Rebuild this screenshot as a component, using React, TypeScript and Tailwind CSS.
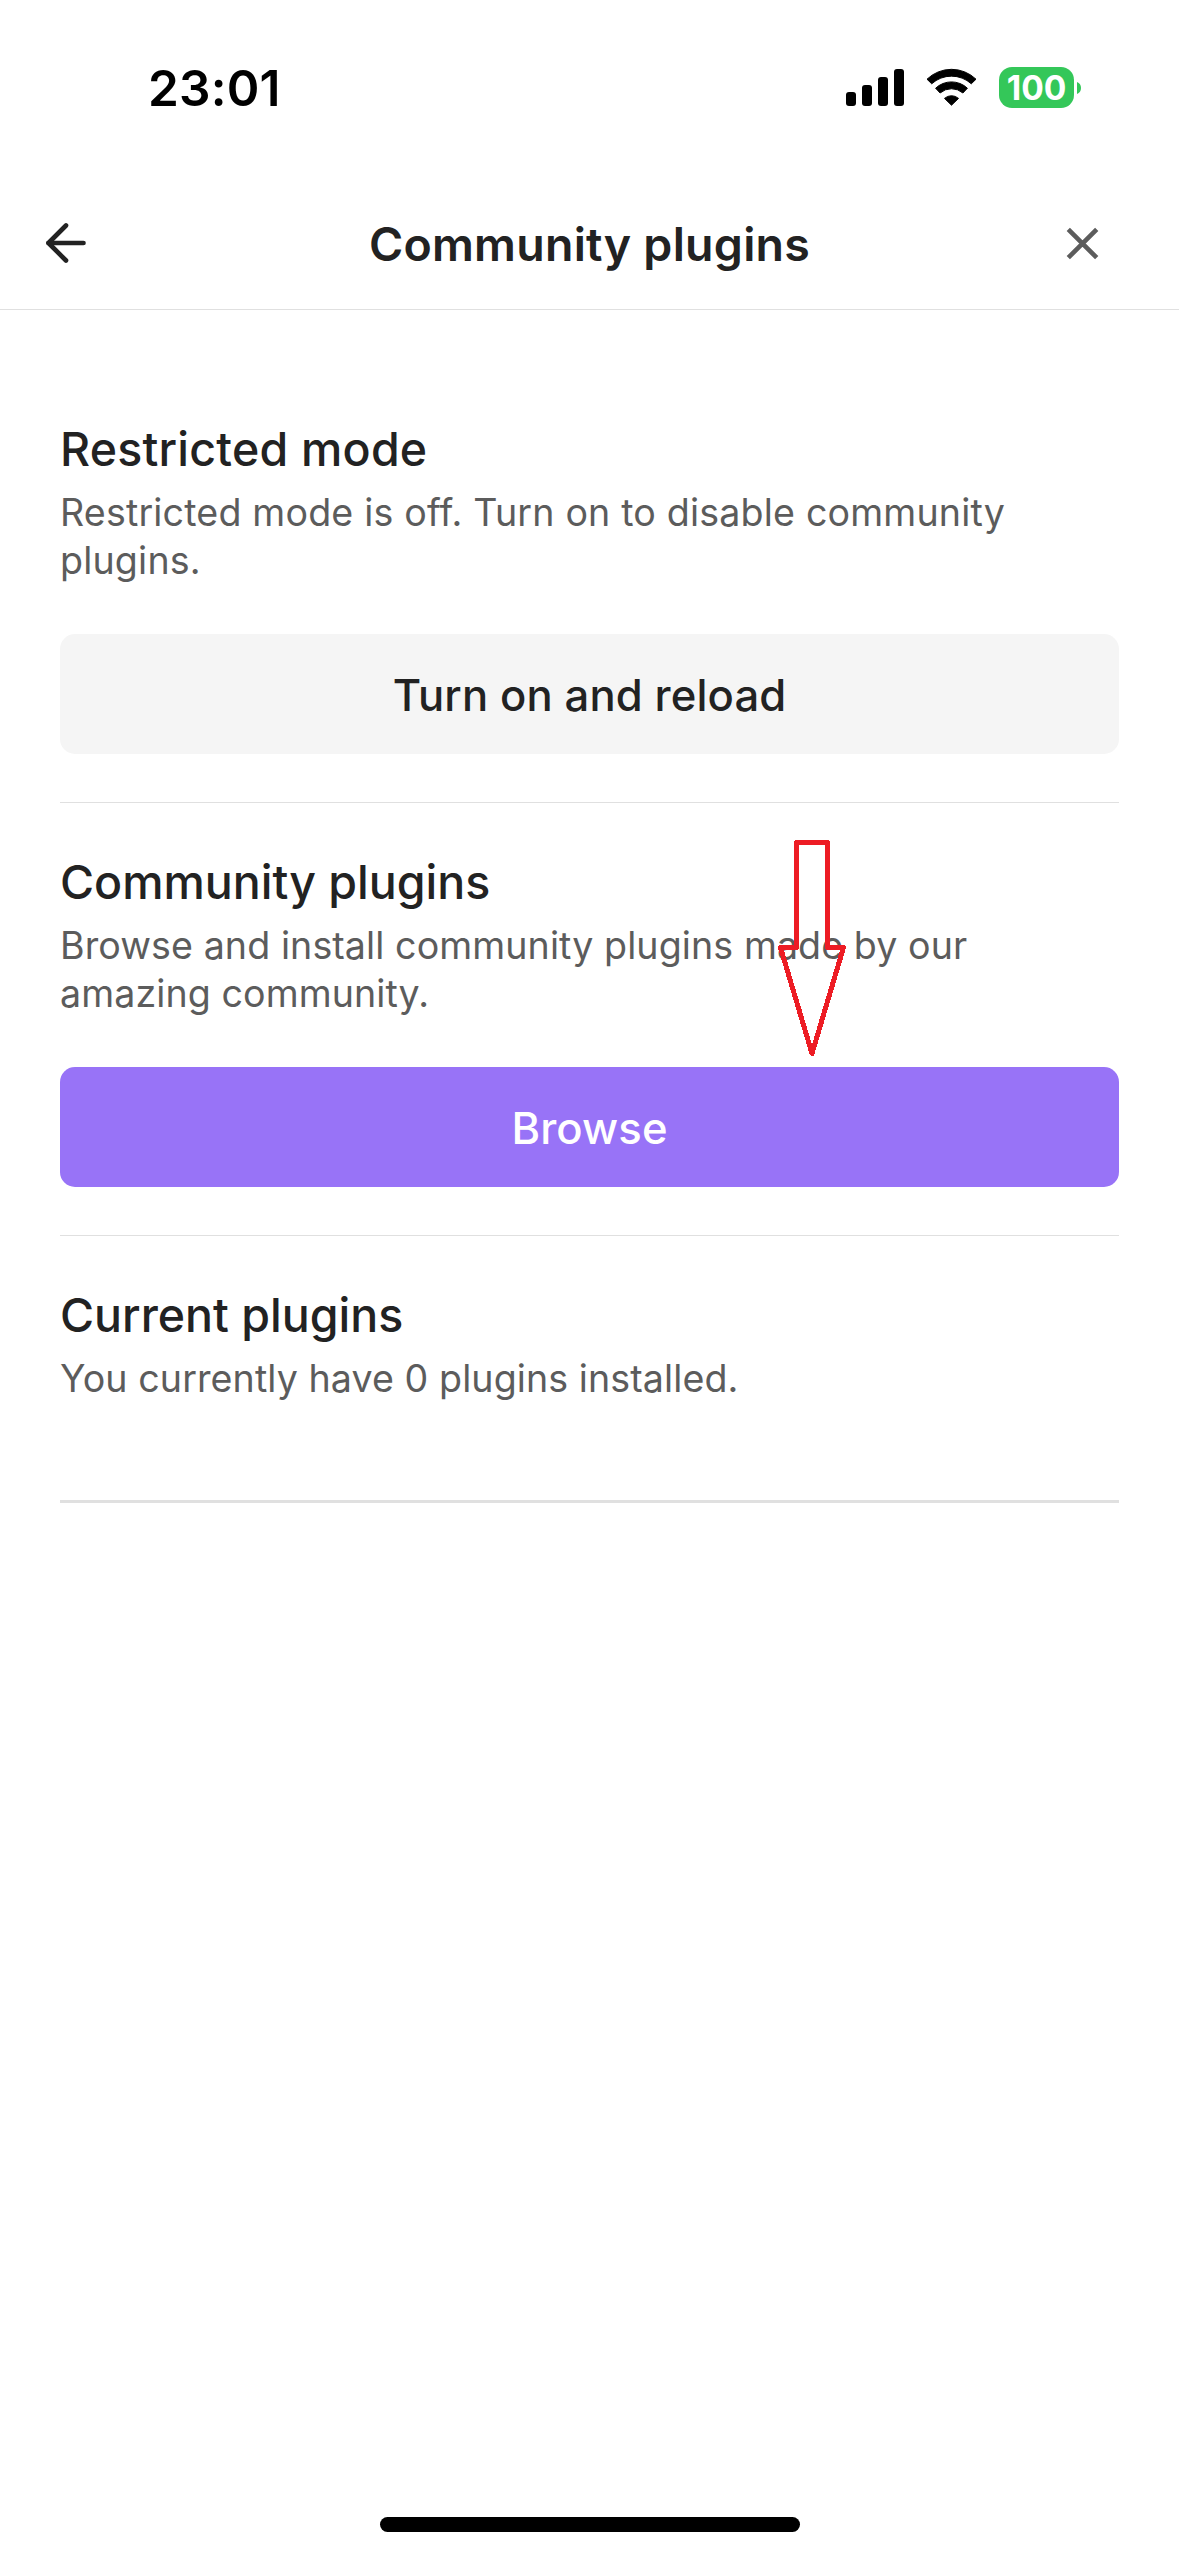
import { ArrowLeft } from "lucide-react";
import type { ReactNode } from "react";

function SignalIcon() {
  return (
    <svg width="58" height="41" viewBox="0 0 58 41" fill="#000">
      <rect x="0" y="25" width="10" height="14" rx="3" />
      <rect x="16" y="18" width="10" height="21" rx="3" />
      <rect x="32" y="10" width="10" height="29" rx="3" />
      <rect x="48" y="2" width="10" height="37" rx="3" />
    </svg>
  );
}

function WifiIcon() {
  return (
    <svg width="51" height="41" viewBox="0 0 51 41" fill="#000" stroke="#000" strokeWidth="1" strokeLinejoin="round">
      <path d="M1 12.2 A35.3 35.3 0 0 1 50 12.2 L45.3 16.8 A29.4 29.4 0 0 0 5.7 16.8 Z" />
      <path d="M9.6 21.2 A23.2 23.2 0 0 1 41.4 21.2 L36.9 26 A17.4 17.4 0 0 0 14.1 26 Z" />
      <path d="M18.5 31.4 A10.5 10.5 0 0 1 32.5 31.4 L25.5 38.2 Z" />
    </svg>
  );
}

function Battery() {
  return (
    <div className="flex h-[41px] items-center gap-[3px]">
      <div className="h-[41px] w-[75px] rounded-[13px] bg-[#34c759] text-center text-[33.5px] leading-[42px] font-bold text-white">
        100
      </div>
      <svg width="4" height="12" viewBox="0 0 4 12" fill="#34c759">
        <path d="M0 0 C2.6 1 4 3.2 4 6 C4 8.800 2.6 11 0 12 Z" />
      </svg>
    </div>
  );
}

function StatusBar() {
  return (
    <div className="flex h-[179px] shrink-0 items-start justify-between pt-[58px] pr-[98px] pl-[148px] text-black">
      <div className="text-[49.5px] leading-[60px] font-semibold tracking-[0.2px]">23:01</div>
      <div className="mt-[9px] flex">
        <SignalIcon />
        <div className="ml-[22px]">
          <WifiIcon />
        </div>
        <div className="ml-[22px]">
          <Battery />
        </div>
      </div>
    </div>
  );
}

function Header() {
  return (
    <header className="grid h-[131px] shrink-0 grid-cols-[126px_1fr_126px] items-center border-b border-[#e0e0e0]">
      <button className="-mt-0.5 ml-9 w-[60px]" aria-label="Back">
        <ArrowLeft size={60} strokeWidth={1.85} color="#222222" />
      </button>
      <h1 className="text-center text-[46.5px] leading-[60px] font-semibold tracking-[0.26px]">Community plugins</h1>
      <button className="-mt-px ml-[13px] w-[33px]" aria-label="Close">
        <svg width="33" height="33" viewBox="0 0 33 33" fill="none" stroke="#5c5c5c" strokeWidth="4.6">
          <path d="M2.3 2.300 L30.7 30.7 M30.7 2.300 L2.3 30.7" />
        </svg>
      </button>
    </header>
  );
}

type SectionProps = {
  title: ReactNode;
  children: ReactNode;
  action?: ReactNode;
};

function Section({ title, children, action }: SectionProps) {
  return (
    <section className="pt-[49px]">
      <h2 className="text-[46.5px] leading-[60px] font-medium">{title}</h2>
      <p className="mt-2.5 text-[37.6px] leading-[48px] text-[#5c5c5c]">{children}</p>
      {action}
    </section>
  );
}

const buttonBase =
  "mt-[49px] mb-12 flex h-[120px] w-full items-center justify-center rounded-[15px] pt-1 text-[43.6px] leading-[54px] font-medium";

export default function App() {
  return (
    <div className="relative flex h-[2556px] w-[1179px] flex-col overflow-hidden bg-white font-['Inter',sans-serif] text-[#222222]">
      <StatusBar />
      <Header />
      <main className="flex-1 px-[60px] pt-[60px]">
        <Section
          title={<span className="tracking-[0.22px]">Restricted mode</span>}
          action={<button className={`${buttonBase} bg-[#f5f5f5] tracking-[0.12px]`}>Turn on and reload</button>}
        >
          <span className="tracking-[0.18px]">
            Restricted mode is off. Turn on to disable community
            <br />
            plugins.
          </span>
        </Section>
        <div className="h-px bg-[#e0e0e0]" />
        <Section
          title="Community plugins"
          action={<button className={`${buttonBase} bg-[#9873f7] text-white tracking-[0.12px]`}>Browse</button>}
        >
          <span className="tracking-[0.09px]">
            Browse and install community plugins made by our
            <br />
            amazing community.
          </span>
        </Section>
        <div className="h-px bg-[#e0e0e0]" />
        <Section title="Current plugins">
          <span className="tracking-[0.09px]">You currently have 0 plugins installed.</span>
        </Section>
        <div className="mt-[97px] h-[3px] bg-[#e0e0e0]" />
      </main>
      <div className="mx-auto mb-6 h-[15px] w-[420px] shrink-0 rounded-full bg-black" />

      {/* Arrow annotation pointing at the Browse button */}
      <svg
        className="pointer-events-none absolute top-[840px] left-[778px]"
        width="68"
        height="217"
        viewBox="0 0 68 217"
        fill="none"
        stroke="#ed1c24"
        strokeWidth="5"
        strokeLinejoin="round"
        shapeRendering="crispEdges"
      >
        <path d="M18.5 2.5 H49.5 V107.5 H65.5 L34 213.5 L2.5 107.5 H18.5 Z" />
      </svg>
    </div>
  );
}
